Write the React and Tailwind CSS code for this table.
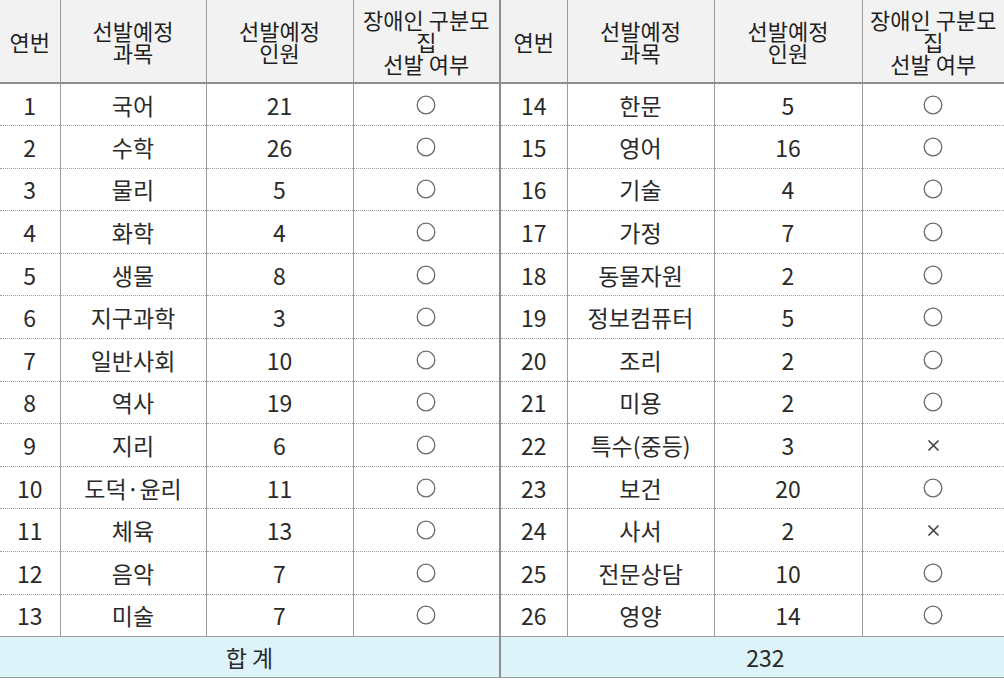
import React from "react";

const LEFT = [
  [1, "국어", 21, true],
  [2, "수학", 26, true],
  [3, "물리", 5, true],
  [4, "화학", 4, true],
  [5, "생물", 8, true],
  [6, "지구과학", 3, true],
  [7, "일반사회", 10, true],
  [8, "역사", 19, true],
  [9, "지리", 6, true],
  [10, "도덕·윤리", 11, true],
  [11, "체육", 13, true],
  [12, "음악", 7, true],
  [13, "미술", 7, true],
];

const RIGHT = [
  [14, "한문", 5, true],
  [15, "영어", 16, true],
  [16, "기술", 4, true],
  [17, "가정", 7, true],
  [18, "동물자원", 2, true],
  [19, "정보컴퓨터", 5, true],
  [20, "조리", 2, true],
  [21, "미용", 2, true],
  [22, "특수(중등)", 3, false],
  [23, "보건", 20, true],
  [24, "사서", 2, false],
  [25, "전문상담", 10, true],
  [26, "영양", 14, true],
];

function Mark({ ok }) {
  if (ok) {
    return (
      <svg width="20" height="20" viewBox="0 0 20 20" className="mx-auto block">
        <circle cx="10" cy="10" r="8.8" fill="none" stroke="#6a6a6a" strokeWidth="1.3" />
      </svg>
    );
  }
  return (
    <svg width="13" height="13" viewBox="0 0 13 13" className="mx-auto block">
      <path d="M1.5 1.5 L11.5 11.5 M11.5 1.5 L1.5 11.5" stroke="#3a3a3a" strokeWidth="1.5" />
    </svg>
  );
}

function Lines({ lines }) {
  return (
    <div className="flex flex-col items-center">
      {lines.map((t) => (
        <div key={t} className="h-[22px] leading-[22px] whitespace-nowrap">
          {t}
        </div>
      ))}
    </div>
  );
}

function HeadGroup({ first }) {
  const sep = "border-r border-[#9c9c9c] font-normal";
  return (
    <>
      <th className={first ? sep : "border-l-2 border-[#8e8e8e] border-r border-r-[#9c9c9c] font-normal"}>
        <Lines lines={["연번"]} />
      </th>
      <th className={sep}>
        <Lines lines={["선발예정", "과목"]} />
      </th>
      <th className={sep}>
        <Lines lines={["선발예정", "인원"]} />
      </th>
      <th className="font-normal">
        <Lines lines={["장애인 구분모", "집", "선발 여부"]} />
      </th>
    </>
  );
}

function BodyGroup({ row, first }) {
  const [no, subject, count, ok] = row;
  return (
    <>
      <td
        className={
          first
            ? "border-r border-[#9c9c9c]"
            : "border-l-2 border-[#8e8e8e] border-r border-r-[#9c9c9c]"
        }
      >
        {no}
      </td>
      <td className="border-r border-[#9c9c9c] whitespace-nowrap">{subject}</td>
      <td className="border-r border-[#9c9c9c]">{count}</td>
      <td>
        <Mark ok={ok} />
      </td>
    </>
  );
}

export default function App() {
  return (
    <div
      className="w-[1004px] h-[680px] overflow-hidden bg-white text-[#2a2a2a]"
      style={{ fontFamily: '"Noto Sans CJK KR", "Noto Sans", sans-serif' }}
    >
      <table className="w-[1004px] table-fixed border-collapse text-center text-[23px] leading-[26px]">
        <colgroup>
          <col className="w-[60px]" />
          <col className="w-[146px]" />
          <col className="w-[147px]" />
          <col className="w-[147px]" />
          <col className="w-[67px]" />
          <col className="w-[147px]" />
          <col className="w-[148px]" />
          <col className="w-[142px]" />
        </colgroup>
        <thead>
          <tr className="h-[83px] bg-[#f2f2f2] border-b-2 border-[#8e8e8e] text-[22px] text-[#1f1f1f]">
            <HeadGroup first />
            <HeadGroup />
          </tr>
        </thead>
        <tbody>
          {LEFT.map((row, i) => {
            const last = i === LEFT.length - 1;
            return (
              <tr
                key={row[0]}
                className={
                  last
                    ? "h-[42.6px] border-b border-[#9c9c9c]"
                    : "h-[42.6px] border-b border-dotted border-[#9c9c9c]"
                }
              >
                <BodyGroup row={row} first />
                <BodyGroup row={RIGHT[i]} />
              </tr>
            );
          })}
          <tr className="h-[41px] bg-[#dbf3f9] border-b border-[#9c9c9c]">
            <td colSpan={4}>합 계</td>
            <td colSpan={4} className="border-l-2 border-[#8e8e8e] pl-[26px]">
              232
            </td>
          </tr>
        </tbody>
      </table>
    </div>
  );
}
